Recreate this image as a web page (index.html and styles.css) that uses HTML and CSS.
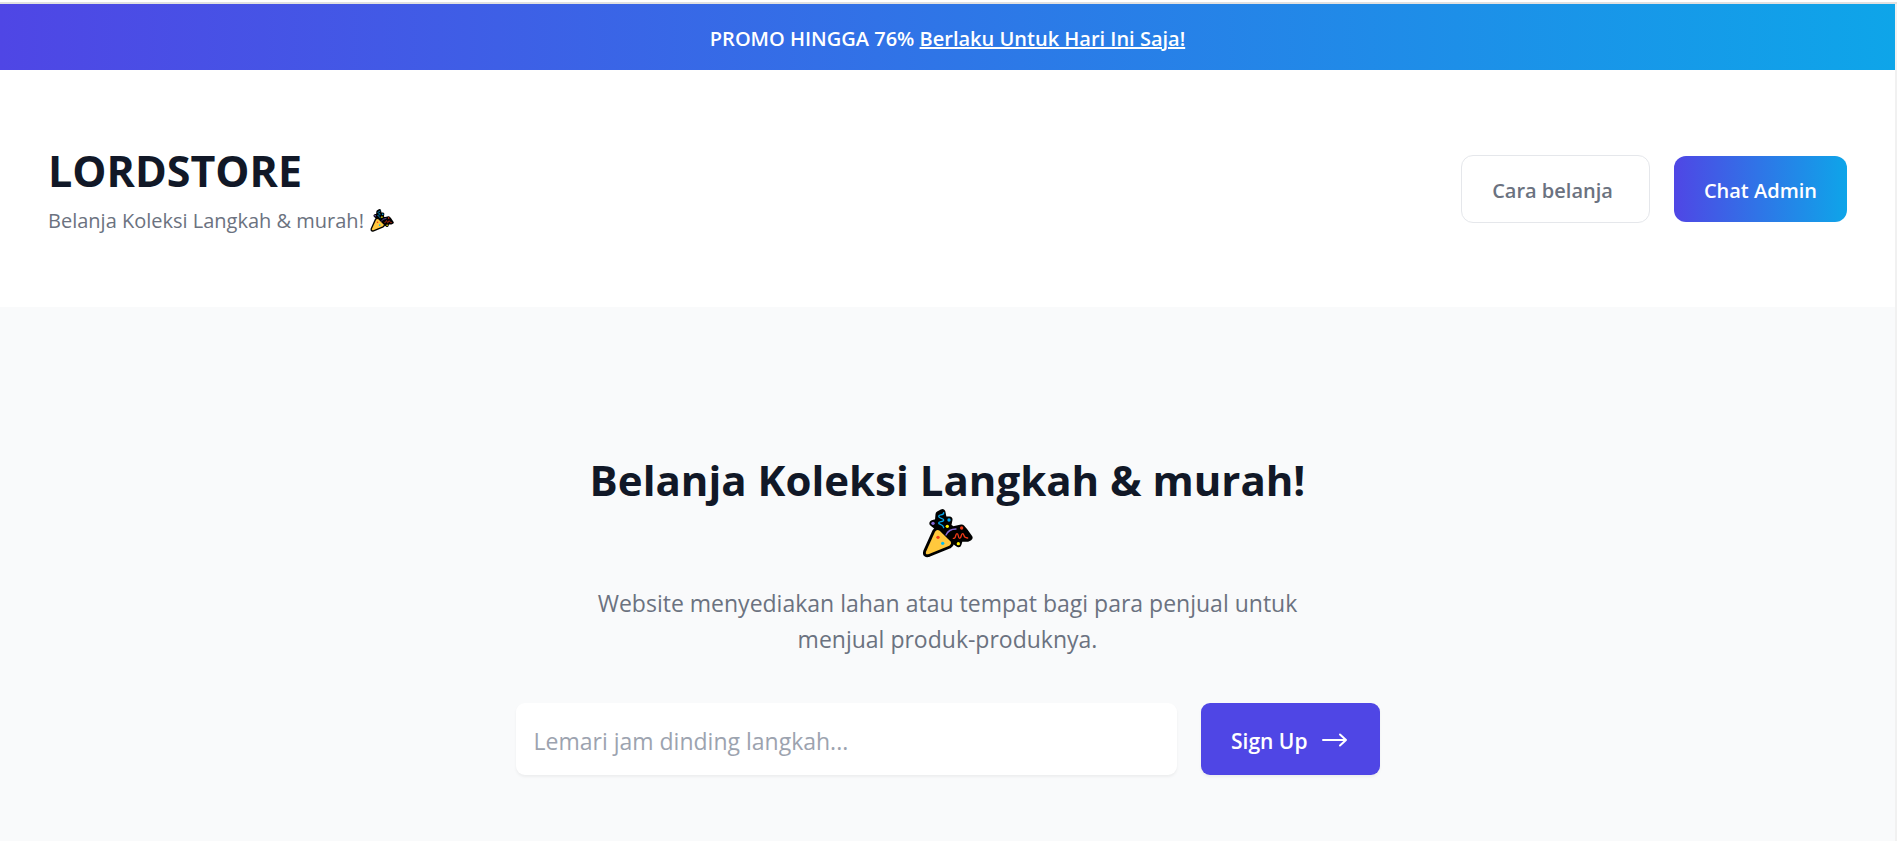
FILE: index.html
```html
<!DOCTYPE html>
<html lang="id">
<head>
<meta charset="utf-8">
<meta name="viewport" content="width=device-width, initial-scale=1">
<title>LORDSTORE</title>
<link rel="stylesheet" href="styles.css">
</head>
<body>
<svg class="defs" aria-hidden="true">
  <symbol id="popper" viewBox="36 30 153 153">
    <g stroke="#000" stroke-linejoin="round" stroke-linecap="round">
      <path d="M75 98 48 158Q45 169 57 165L118 140Q127 134 121 127L89 95Q80 90 75 98Z" fill="#000" stroke-width="17"/>
      <path d="M86 46 97 40 101 60 118 62 114 82 128 92 155 86 164 96 178 116 172 119 150 118 145 135 110 110 84 86 68 73 84 68Z" fill="#000" stroke-width="19"/>
    </g>
    <path d="M75 98 48 158Q45 169 57 165L118 140Q127 134 121 127L89 95Q80 90 75 98Z" fill="#ffc83d"/>
    <g fill="none" stroke-width="4" stroke-linecap="round" stroke-linejoin="round">
      <path d="M101 41C101 52 86 44 86 52S101 56 101 63 86 66 86 72 99 74 101 86" stroke="#00a6ed"/>
      <path d="M108 108Q116 90 138 90" stroke="#8467d7"/>
      <path d="M130 118C139 120 135 104 141 104S143 118 149 118 152 104 158 104 158 118 173 117" stroke="#f03a17"/>
    </g>
    <circle cx="69" cy="73" r="5" fill="#8467d7"/>
    <circle cx="117" cy="63" r="5" fill="#00a6ed"/>
    <circle cx="112" cy="82" r="5" fill="#fff000"/>
    <circle cx="155" cy="87" r="5" fill="#f03a17"/>
    <circle cx="145" cy="134" r="5" fill="#fff000"/>
    <circle cx="84" cy="115" r="5" fill="#f03a17"/>
    <circle cx="98" cy="133" r="5" fill="#00bcf2"/>
  </symbol>
</svg>
<div class="edge"></div>
<div class="page">
  <p class="promo">PROMO HINGGA 76% <a href="#">Berlaku Untuk Hari Ini Saja!</a></p>
  <header class="header">
    <div class="brand">
      <h1 class="title">LORDSTORE</h1>
      <p class="tagline">Belanja Koleksi Langkah &amp; murah! <svg class="emoji-small" role="img" aria-label="Party popper"><use href="#popper"/></svg></p>
    </div>
    <div class="actions">
      <button class="btn btn-outline" type="button">Cara belanja</button>
      <button class="btn btn-gradient" type="button">Chat Admin</button>
    </div>
  </header>
  <main class="hero">
    <div class="intro">
      <h2 class="title title-hero">Belanja Koleksi Langkah &amp; murah! <svg class="emoji-large" role="img" aria-label="Party popper"><use href="#popper"/></svg></h2>
      <p class="lead">Website menyediakan lahan atau tempat bagi para penjual untuk menjual produk-produknya.</p>
    </div>
    <form class="search">
      <input class="field" type="text" placeholder="Lemari jam dinding langkah..." aria-label="Cari barang">
      <button class="submit" type="submit">Sign Up
        <svg class="arrow" viewBox="0 0 30 30" aria-hidden="true"><path d="M3 14H26M20 8.500L26 14 20 19.500"/></svg>
      </button>
    </form>
  </main>
</div>
</body>
</html>
```
FILE: styles.css
```css
* { box-sizing: border-box; margin: 0; }

body {
  display: flex;
  flex-direction: column;
  min-height: 100vh;
  background: #fff;
  color: #111827;
  font-family: "Open Sans", "Noto Sans", sans-serif;
}

.defs { position: absolute; width: 0; height: 0; }

.edge { height: 4px; border-bottom: 2px solid #e1e1e1; }

.page {
  flex: 1;
  display: flex;
  flex-direction: column;
  border-right: 2px solid #f1f1f1;
}

.promo {
  padding: 20px 24px 16px;
  background: linear-gradient(to right, #4f46e5, #0ea5e9);
  color: #fff;
  font-size: 20px;
  font-weight: 600;
  line-height: 30px;
  text-align: center;
}

.promo a { color: inherit; text-decoration: underline; }

.header {
  display: flex;
  align-items: center;
  justify-content: space-between;
  padding: 72px 48px;
}

.title { font-size: 43px; font-weight: 700; line-height: 58px; }

.title-hero { font-size: 42px; }

.tagline {
  display: flex;
  align-items: center;
  gap: 6px;
  margin-top: 7px;
  color: #6b7280;
  font-size: 20px;
  line-height: 28px;
}

.emoji-small { width: 24px; height: 24px; }

.actions { display: flex; align-items: center; gap: 24px; }

.btn {
  padding: 20px 30px 16px;
  border: 0;
  border-radius: 12px;
  font: 600 20px/30px "Open Sans", "Noto Sans", sans-serif;
}

.btn-outline {
  padding-right: 36px;
  border: 1px solid #e5e7eb;
  background: #fff;
  color: #6b7280;
}

.btn-gradient {
  background: linear-gradient(to right, #4f46e5, #0ea5e9);
  color: #fff;
}

.hero { flex: 1; padding: 144px 48px 48px; background: #f9fafb; }

.intro { max-width: 768px; margin: 0 auto; text-align: center; }

.emoji-large { width: 51px; height: 51px; vertical-align: top; }

.lead {
  margin-top: 18px;
  color: #6b7280;
  font-size: 23px;
  line-height: 36px;
}

.search {
  display: flex;
  gap: 24px;
  max-width: 864px;
  margin: 46px auto 0;
}

.field {
  flex: 1;
  min-width: 0;
  padding: 20px 18px 16px;
  border: 0;
  border-radius: 9px;
  background: #fff;
  box-shadow: 0 2px 3px rgba(0, 0, 0, 0.05);
  color: #111827;
  font: 23px/36px "Open Sans", "Noto Sans", sans-serif;
}

.field::placeholder { color: #9ca3af; opacity: 1; }

.submit {
  display: flex;
  align-items: center;
  gap: 12px;
  padding: 20px 30px 16px;
  border: 0;
  border-radius: 9px;
  background: #4f46e5;
  box-shadow: 0 2px 3px rgba(0, 0, 0, 0.05);
  color: #fff;
  font: 600 21px/36px "Open Sans", "Noto Sans", sans-serif;
}

.arrow {
  width: 30px;
  height: 30px;
  fill: none;
  stroke: #fff;
  stroke-width: 2;
  stroke-linecap: round;
  stroke-linejoin: round;
}
```
